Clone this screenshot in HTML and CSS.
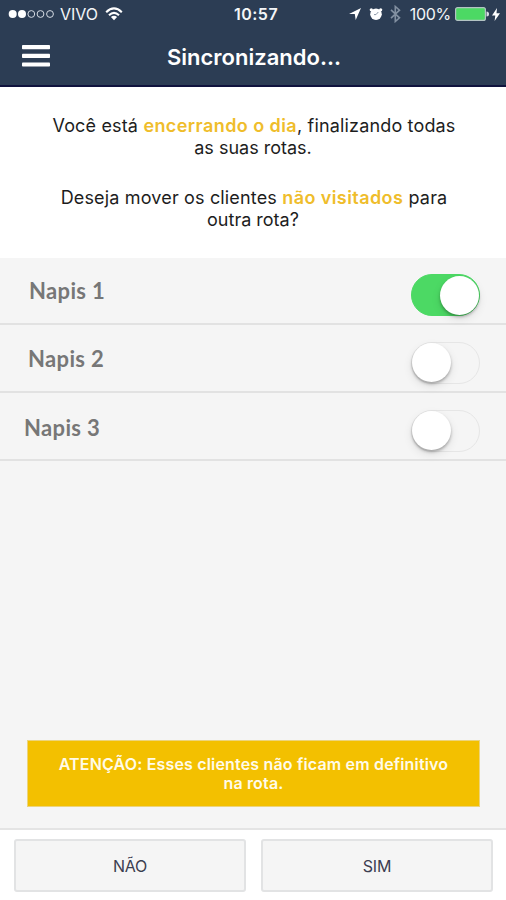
FILE: index.html
```html
<!DOCTYPE html>
<html lang="pt-BR">
<head>
<meta charset="utf-8">
<title>Sincronizando</title>
<link rel="stylesheet" href="styles.css">
</head>
<body>
<div class="app">
  <header class="top">
    <div class="status">
      <div class="status-left">
        <svg class="signal" width="47" height="10" viewBox="0 0 47 10"><g fill="#fff"><circle cx="4.7" cy="5" r="4"/><circle cx="14" cy="5" r="4"/></g><g fill="none" stroke="#d6dce4" stroke-width="1"><circle cx="23.3" cy="5" r="3.4"/><circle cx="32.5" cy="5" r="3.4"/><circle cx="42" cy="5" r="3.4"/></g></svg>
        <span class="carrier">VIVO</span>
        <svg class="wifi" width="18" height="14" viewBox="0 0 18 14"><g fill="none" stroke="#fff" stroke-width="2.1"><path d="M1.2 5.2Q9-2.4 16.8 5.2"/><path d="M4 8.3Q9 3.6 14 8.3"/></g><path d="M5.9 10Q9 7.6 12.1 10L9 13.2z" fill="#fff"/></svg>
      </div>
      <span class="clock">10:57</span>
      <div class="status-right">
        <svg width="12" height="14" viewBox="0 0 12 14"><path d="M12 1L0 7.1h5.8L6.7 13z" fill="#fff"/></svg>
        <svg class="alarm" width="14" height="14" viewBox="0 0 14 14"><g fill="#fff"><circle cx="7" cy="7.2" r="5.8"/><circle cx="2.3" cy="2.8" r="1.6"/><circle cx="11.7" cy="2.8" r="1.6"/></g><path d="M7 7.6L9.3 5M7 7.6H5" stroke="#8d99a8" stroke-width="1"/></svg>
        <svg class="bluetooth" width="11" height="18" viewBox="0 0 11 18"><path d="M1 4.8l8.500 8-4.200 3.700V1.500l4.200 3.700-8.500 8" fill="none" stroke="#8290a1" stroke-width="1.600"/></svg>
        <span class="percent">100%</span>
        <svg class="battery" width="35" height="14" viewBox="0 0 35 14"><rect x=".6" y=".6" width="29.800" height="12.800" rx="2" fill="#4cd964" stroke="#b3c3c3" stroke-width="1.200"/><path d="M31.500 4.500q2.500 0 2.500 2.500t-2.500 2.500z" fill="#d9dee4"/></svg>
        <svg class="bolt" width="8" height="13" viewBox="0 0 8 13"><path d="M5 0L0 7.400h3.300L2.600 13 8 5.300H4.500z" fill="#fff"/></svg>
      </div>
    </div>
    <div class="nav">
      <svg class="menu" width="28" height="22" viewBox="0 0 28 22"><g fill="#fff"><rect y="0" width="28" height="4.200" rx=".8"/><rect y="8.800" width="28" height="4.200" rx=".8"/><rect y="17.400" width="28" height="4.200" rx=".8"/></g></svg>
      <h1 class="title">Sincronizando...</h1>
    </div>
  </header>
  <section class="intro">
    <p><span class="long">Você está <b>encerrando o dia</b>, finalizando todas</span><br>as suas rotas.</p>
    <p><span class="long">Deseja mover os clientes <b>não visitados</b> para</span><br>outra rota?</p>
  </section>
  <main class="content">
    <div class="row row-one"><span class="label">Napis 1</span><span class="toggle on"><i class="knob"></i></span></div>
    <div class="row row-two"><span class="label">Napis 2</span><span class="toggle"><i class="knob"></i></span></div>
    <div class="row row-three"><span class="label">Napis 3</span><span class="toggle"><i class="knob"></i></span></div>
    <p class="notice">ATENÇÃO: Esses clientes não ficam em definitivo<br>na rota.</p>
  </main>
  <footer class="actions">
    <button class="btn">NÃO</button>
    <button class="btn">SIM</button>
  </footer>
</div>
</body>
</html>
```
FILE: styles.css
```css
* { box-sizing: border-box; }
body { margin: 0; font-family: Inter, "Liberation Sans", sans-serif; }
svg { display: block; flex: none; }
.app { width: 506px; height: 900px; display: flex; flex-direction: column; overflow: hidden; background: #fff; }
.top { height: 87px; background: #2c3d54; border-bottom: 2px solid #10133d; color: #fff; }
.status { height: 28px; display: grid; grid-template-columns: 1fr auto 1fr; align-items: center; padding: 0 6px 0 8px; color: #f4f6f8; font-size: 16px; }
.status-left, .status-right { display: flex; align-items: center; }
.status-right { justify-content: flex-end; }
.carrier { margin-left: 5px; letter-spacing: 0; }
.wifi { margin-left: 7px; }
.clock { margin-left: 4px; font-weight: 600; letter-spacing: 0.5px; }
.alarm { margin-left: 8px; }
.bluetooth { margin-left: 7px; }
.percent { margin-left: 9px; letter-spacing: -0.3px; }
.battery { margin-left: 4px; }
.bolt { margin-left: 2px; }
.nav { height: 57px; display: grid; grid-template-columns: 1fr auto 1fr; align-items: center; padding: 0 20px 2px 22px; }
.title { margin: 2px 0 0; font-size: 22px; line-height: 28px; font-weight: 600; }
.intro { height: 171px; padding-top: 28px; text-align: center; font-size: 18px; line-height: 22px; color: #1d1d1d; }
.intro p { margin: 0 0 28px; white-space: nowrap; }
.intro b { color: #efbd2b; font-weight: 600; letter-spacing: 0.42px; }
.long { margin-left: 2px; letter-spacing: 0.16px; }
.content { flex: 1; display: flex; flex-direction: column; background: #f5f5f5; }
.row { height: 68px; display: flex; justify-content: space-between; align-items: center; padding: 9px 26px 0 28px; border-bottom: 2px solid #e2e2e2; }
.row-one { height: 67px; padding-left: 29px; }
.row-three { padding-left: 24px; }
.label { font: bold 22px/26px Lato, sans-serif; letter-spacing: 0.35px; color: #777; margin-bottom: 8px; }
.row-three .label { margin-bottom: 5px; }
.toggle { width: 69px; height: 42px; border-radius: 21px; border: 1.5px solid #e6e6e6; display: flex; align-items: center; }
.toggle.on { background: #4cd964; border-color: #4cd964; justify-content: flex-end; }
.knob { width: 39px; height: 39px; border-radius: 50%; background: #fff; box-shadow: 0 2px 3px rgba(0,0,0,.28), 0 4px 10px rgba(0,0,0,.1); }
.notice { margin: auto 26px 21px 27px; height: 67px; padding-top: 14px; background: #f3c000; border: 1px solid #ecd47c; color: #fffbe9; text-align: center; font-size: 16px; line-height: 19px; font-weight: 600; letter-spacing: 0.17px; white-space: nowrap; }
.actions { height: 72px; display: grid; grid-template-columns: 232px 232px; gap: 15px; padding: 9px 13px 0 14px; border-top: 2px solid #e4e4e4; }
.btn { height: 53px; padding: 0; border: 2px solid #e2e3e4; border-radius: 3px; background: #f5f5f5; font: 16px Inter, "Liberation Sans", sans-serif; letter-spacing: -0.2px; color: #3c3d50; }
```
